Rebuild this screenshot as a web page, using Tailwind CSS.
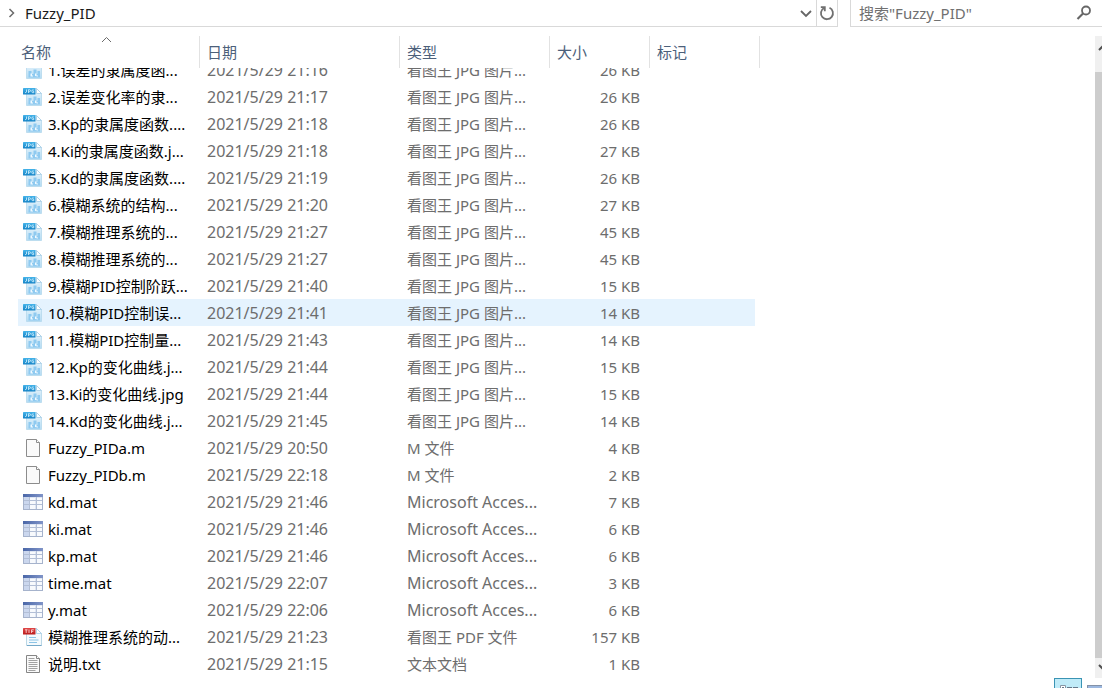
<!DOCTYPE html>
<html lang="zh-CN">
<head>
<meta charset="utf-8">
<title>Fuzzy_PID</title>
<script src="https://cdn.jsdelivr.net/npm/@tailwindcss/browser@4"></script>
</head>
<body class="h-screen flex flex-col overflow-hidden bg-white text-[15px] font-['Noto_Sans','Noto_Sans_CJK_SC',sans-serif] text-[#6d6d6d]">
<svg class="absolute w-0 h-0" aria-hidden="true">
  <defs>
    <linearGradient id="sky" x1="0" y1="0" x2="0" y2="1"><stop offset="0" stop-color="#eef7fc"/><stop offset="1" stop-color="#b4dcf4"/></linearGradient>
    <linearGradient id="tag" x1="0" y1="0" x2="0" y2="1"><stop offset="0" stop-color="#46b4ea"/><stop offset="1" stop-color="#1583c6"/></linearGradient>
    <linearGradient id="red" x1="0" y1="0" x2="0" y2="1"><stop offset="0" stop-color="#e04848"/><stop offset="1" stop-color="#b91c1c"/></linearGradient>
    <linearGradient id="head" x1="0" y1="0" x2="1" y2="0"><stop offset="0" stop-color="#4a67a8"/><stop offset="1" stop-color="#8094c8"/></linearGradient>
  </defs>
  <symbol id="jpg" viewBox="0 0 20 20">
    <path d="M3.500 1.500h10l5 5v12h-15z" fill="url(#sky)" stroke="#b5d8ec" stroke-width=".8"/>
    <path d="M13.500 1.500v5h5z" fill="#fff" stroke="#a3cce5" stroke-width=".8"/>
    <path d="M5.500 17.500v-6.500h3v3h2v-4.500h3v4.500h1v-3h2.500v6.500z" fill="#8fcaf0"/>
    <path d="M7.500 16.500v-3h1.500v2h1v1zM12 16v-2.500h1.500v2h1.500v1z" fill="#f2faff"/>
    <rect x="0" y="1" width="12.500" height="6.500" rx=".6" fill="url(#tag)"/>
    <path d="M3.500 2.500v2.500q-.5 1-1.500.5M5.500 6V2.700h1q1 .2 1 1t-1 1h-1M10.800 3q-2-.7-2 1.300t2 1.400V4.500h-.9" fill="none" stroke="#d4f2ff" stroke-width=".8"/>
  </symbol>
  <symbol id="file" viewBox="0 0 20 20">
    <path d="M3.500 1.500h10l3 3v14h-13z" fill="#fafafa" stroke="#8c8c8c"/>
    <path d="M13.500 1.500v3h3" fill="#fff" stroke="#8c8c8c"/>
  </symbol>
  <symbol id="mat" viewBox="0 0 20 20">
    <rect x=".5" y="2.500" width="19" height="15" fill="#dfe6f3" stroke="#a6b3cc"/>
    <rect x="0" y="2" width="20" height="3" fill="url(#head)"/>
    <path d="M1 5h5v12H1z" fill="#cbd7ee"/>
    <path d="M7 6h5v11H7zM14 6h5v11h-5z" fill="#f8fafd"/>
    <path d="M6.500 5v12M13.500 5v12M1 8.500h18M1 12.500h18" stroke="#b3bfd6" fill="none"/>
  </symbol>
  <symbol id="pdf" viewBox="0 0 20 20">
    <path d="M3.500 1.500h10l5 5v12h-15z" fill="#f4fafd" stroke="#a9cde0" stroke-width=".8"/>
    <path d="M13.500 1.500v5h5z" fill="#fff" stroke="#a3cce5" stroke-width=".8"/>
    <path d="M6 10.500h7M6 13h9.500M6 15.500h8" stroke="#8cc4e6" fill="none"/>
    <path d="M4 18.500h14.500" stroke="#74a8c8"/>
    <rect x="0" y="1" width="12.500" height="6.500" rx=".6" fill="url(#red)"/>
    <path d="M2 2.800h2.500M3.200 2.800V6M6 2.500V6M8.500 6V2.800h2.300M8.500 4.400h1.800" fill="none" stroke="#ffe0e0" stroke-width=".8"/>
  </symbol>
  <symbol id="txt" viewBox="0 0 20 20">
    <path d="M3.500 1.500h10l3 3v14h-13z" fill="#fafafa" stroke="#858585"/>
    <path d="M13.500 1.500v3h3" fill="#fff" stroke="#858585"/>
    <path d="M5.500 4.500h6M5.500 6.500h9M5.500 8.500h9M5.500 10.500h9M5.500 12.500h9M5.500 14.500h9M5.500 16.500h7" stroke="#a2a2a2" fill="none"/>
  </symbol>
</svg>

<header class="flex shrink-0 h-[27px] leading-5">
  <nav class="flex flex-1 items-center border-b border-r border-[#d9d9d9]">
    <svg class="ml-2 w-2 h-3" viewBox="0 0 8 12" fill="none" stroke="#6b6b6b" stroke-width="1.500"><path d="M1.500 2l4 4-4 4"/></svg>
    <a href="#" class="ml-[9px] flex-1 text-[#1a1a1a]">Fuzzy_PID</a>
    <button aria-label="历史记录" class="w-5 h-full flex items-center justify-center"><svg class="w-3 h-3" viewBox="0 0 12 12" fill="none" stroke="#666" stroke-width="1.800"><path d="M1 4l5 5 5-5"/></svg></button>
    <button aria-label="刷新" class="w-[21px] h-full border-l border-[#d9d9d9] flex items-center justify-center"><svg class="w-4 h-4" viewBox="0 0 16 16" fill="none" stroke="#707070" stroke-width="1.800"><path d="M10.500 2.800a6 6 0 1 1-5.500.2M1.800 2.200h4v4"/></svg></button>
  </nav>
  <label class="ml-3 w-[252px] flex items-center border-b border-l border-[#d9d9d9]">
    <input type="text" aria-label="搜索" placeholder="搜索&quot;Fuzzy_PID&quot;" class="ml-2 flex-1 min-w-0 outline-none placeholder:text-[#707070]">
    <svg class="mr-2.5 w-4 h-4" viewBox="0 0 16 16" fill="none" stroke="#666"><circle cx="10" cy="5.500" r="4" stroke-width="1.800"/><path d="M7 8.500L1.500 14" stroke-width="2.200"/></svg>
  </label>
</header>

<main class="flex flex-1 min-h-0 pt-[9px]">
  <div class="flex-1 flex flex-col min-h-0 pl-[18px]">
    <table class="table-fixed w-[742px] shrink-0 border-separate border-spacing-0">
      <thead class="text-left text-[#4c607a]">
        <tr class="h-8">
          <th class="relative w-[182px] p-0 pl-[3px] font-normal border-r border-[#e2e2e2]"><svg class="absolute left-[83px] top-0 w-3 h-2" viewBox="0 0 12 8" fill="none" stroke="#6b6b6b"><path d="M1 6l4.500-4.500L10 6"/></svg>名称</th>
          <th class="w-[200px] p-0 pl-[7px] font-normal border-r border-[#e2e2e2]">日期</th>
          <th class="w-[150px] p-0 pl-[7px] font-normal border-r border-[#e2e2e2]">类型</th>
          <th class="w-[100px] p-0 pl-[7px] font-normal border-r border-[#e2e2e2]">大小</th>
          <th class="p-0 pl-[7px] font-normal border-r border-[#e2e2e2]">标记</th>
        </tr>
      </thead>
    </table>
    <div class="flex-1 min-h-0 overflow-hidden">
      <!-- the list is scrolled down by part of a row -->
      <table class="-mt-3 table-fixed w-[742px] border-separate border-spacing-0">
        <colgroup><col class="w-[182px]"><col class="w-[200px]"><col class="w-[150px]"><col class="w-[100px]"><col></colgroup>
        <tbody id="rows"></tbody>
      </table>
    </div>
  </div>
  <div class="w-[7px] bg-[#f0f0f0] flex flex-col overflow-hidden">
    <svg class="h-9 w-4 shrink-0" viewBox="0 0 16 36" fill="none" stroke="#505050" stroke-width="2"><path d="M4 14l4-4 4 4"/></svg>
    <div class="flex-1 bg-[#cdcdcd]"></div>
    <svg class="h-5 w-4 shrink-0" viewBox="0 0 16 20" fill="none" stroke="#505050" stroke-width="2"><path d="M4 7l4 4 4-4"/></svg>
  </div>
</main>

<footer class="flex shrink-0 justify-end gap-[5px] h-[10px] overflow-hidden">
  <button aria-label="详细信息" class="w-7 h-5 border border-[#3a94b4] bg-[#c0ebf8]"><svg class="w-full h-full" viewBox="0 0 26 18" fill="none"><path d="M5.500 6.500h5v8h-5z" fill="#fff" stroke="#8796a5"/><path d="M12 8.500h5M18 8.500h5M7 8.500h2" stroke="#66788a"/></svg></button>
  <button aria-label="大缩略图" class="mt-[7px] w-[15px] h-4 border-t border-l border-[#8492a8] bg-[#9cb8e0]"></button>
</footer>

<script>
const J = '看图王 JPG 图片...', A = 'Microsoft Acces...';
const files = [
  ['jpg','1.误差的隶属度函...','21:16',J,26],
  ['jpg','2.误差变化率的隶...','21:17',J,26],
  ['jpg','3.Kp的隶属度函数....','21:18',J,26],
  ['jpg','4.Ki的隶属度函数.j...','21:18',J,27],
  ['jpg','5.Kd的隶属度函数....','21:19',J,26],
  ['jpg','6.模糊系统的结构...','21:20',J,27],
  ['jpg','7.模糊推理系统的...','21:27',J,45],
  ['jpg','8.模糊推理系统的...','21:27',J,45],
  ['jpg','9.模糊PID控制阶跃...','21:40',J,15],
  ['jpg','10.模糊PID控制误...','21:41',J,14],
  ['jpg','11.模糊PID控制量...','21:43',J,14],
  ['jpg','12.Kp的变化曲线.j...','21:44',J,15],
  ['jpg','13.Ki的变化曲线.jpg','21:44',J,15],
  ['jpg','14.Kd的变化曲线.j...','21:45',J,14],
  ['file','Fuzzy_PIDa.m','20:50','M 文件',4],
  ['file','Fuzzy_PIDb.m','22:18','M 文件',2],
  ['mat','kd.mat','21:46',A,7],
  ['mat','ki.mat','21:46',A,6],
  ['mat','kp.mat','21:46',A,6],
  ['mat','time.mat','22:07',A,3],
  ['mat','y.mat','22:06',A,6],
  ['pdf','模糊推理系统的动...','21:23','看图王 PDF 文件',157],
  ['txt','说明.txt','21:15','文本文档',1]
];
document.getElementById('rows').innerHTML = files.map(([icon, name, time, type, size], i) => {
  const bg = i === 9 ? 'bg-[#e5f3fe]' : '';
  const typeSize = type === A ? 'text-[16px]' : '';
  return `<tr class="h-[27px] leading-5 whitespace-nowrap">
    <td class="p-0 pl-[5px] text-black ${bg}"><div class="flex items-center gap-[5px]"><svg class="w-5 h-5 shrink-0"><use href="#${icon}"/></svg>${name}</div></td>
    <td class="p-0 pl-[7px] text-[16px] ${bg}">2021/5/29 ${time}</td>
    <td class="p-0 pl-[7px] ${typeSize} ${bg}">${type}</td>
    <td class="p-0 pr-2.5 text-right ${bg}">${size} KB</td>
    <td class="p-0"><div class="h-[27px] mr-[5px] ${bg}"></div></td>
  </tr>`;
}).join('');
</script>
</body>
</html>
